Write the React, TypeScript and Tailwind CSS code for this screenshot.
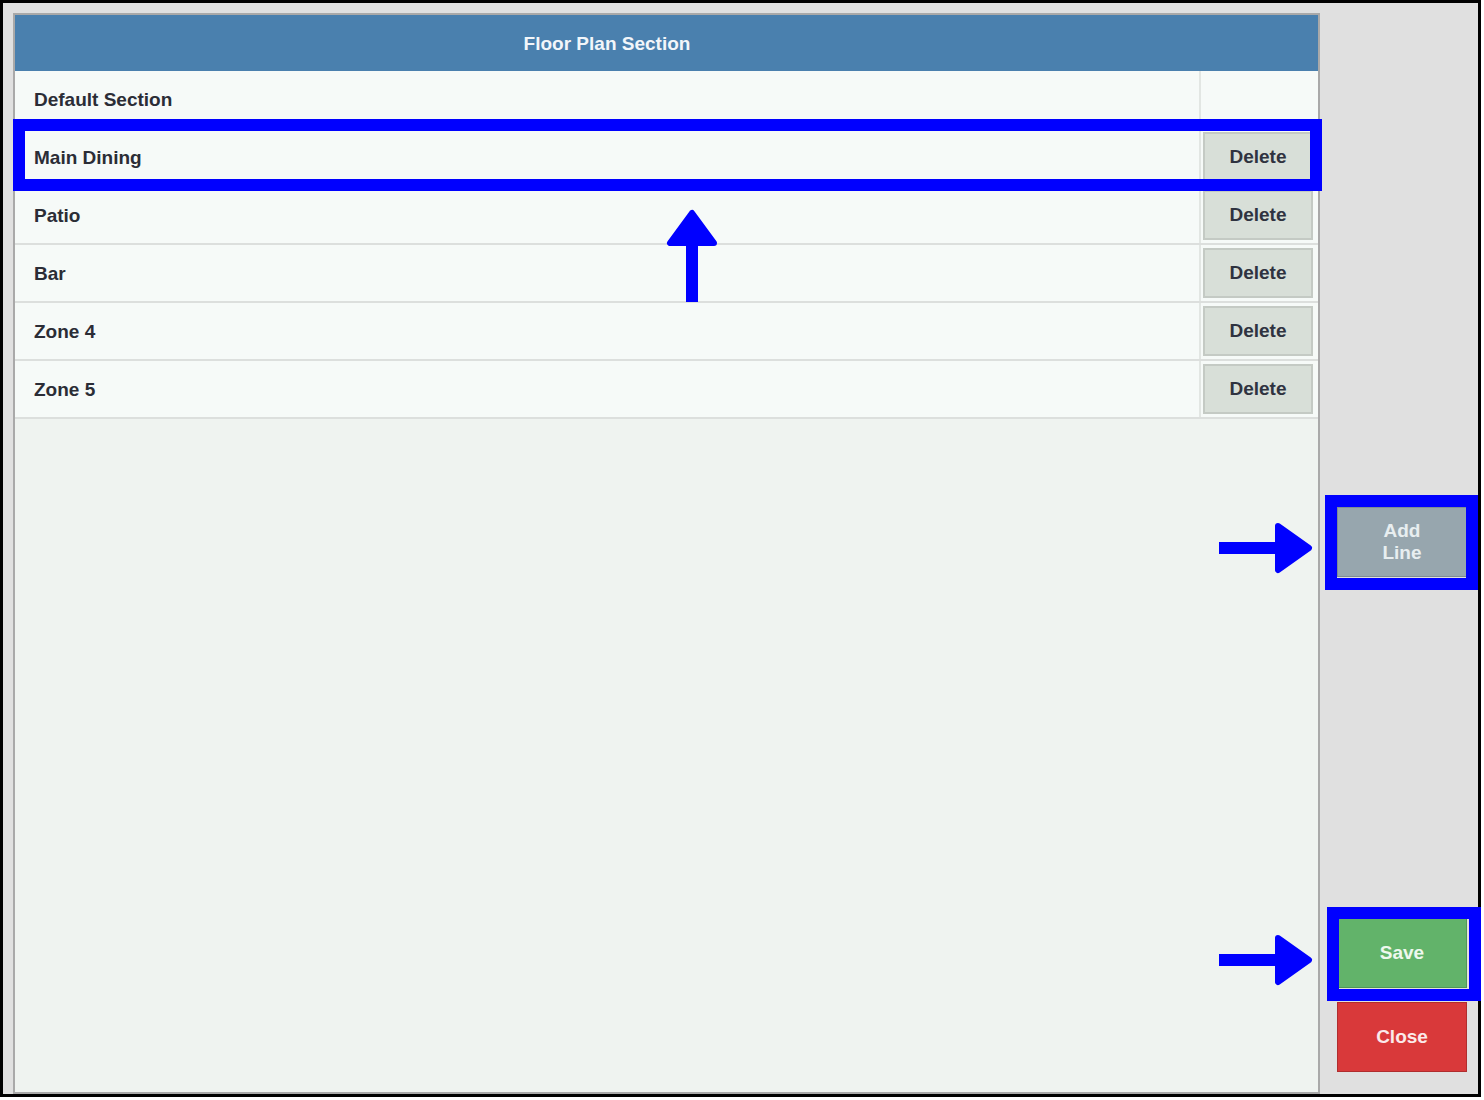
import React from "react";

const ROWS = [
  { name: "Default Section", deletable: false },
  { name: "Main Dining", deletable: true },
  { name: "Patio", deletable: true },
  { name: "Bar", deletable: true },
  { name: "Zone 4", deletable: true },
  { name: "Zone 5", deletable: true },
];

export default function App() {
  return (
    <div className="relative w-[1484px] h-[1100px] bg-white font-['Liberation_Sans',Arial,sans-serif]">
      <div className="flex w-[1481px] h-[1097px] border-[3px] border-black bg-[#e0e0e0]">
        {/* list panel */}
        <div className="ml-[10px] mt-[10px] flex w-[1307px] flex-col border-2 border-[#a9a9a9] bg-[#eff3f0]">
          <div className="flex h-[56px] shrink-0 bg-[#4a80ae] text-[19px] font-bold text-[#f2f6fa]">
            <div className="flex flex-1 items-center justify-center pt-[2px]">Floor Plan Section</div>
            <div className="w-[119px]" />
          </div>
          {ROWS.map((row) => (
            <Row key={row.name} {...row} />
          ))}
        </div>

        {/* actions */}
        <div className="flex flex-1 flex-col pl-[17px] pb-[22px]">
          <button className="mt-[504px] flex h-[70px] w-[130px] flex-col items-center justify-center border border-[#7f8c93] bg-[#97a6ae] text-[19px] font-bold leading-[22px] text-[#e8eef0]">
            <span>Add</span>
            <span>Line</span>
          </button>
          <button className="mt-auto h-[70px] w-[130px] border border-[#4f9656] bg-[#62b36a] text-[19px] font-bold text-[#eef8ee]">
            Save
          </button>
          <button className="mt-[14px] h-[70px] w-[130px] border border-[#b02d2e] bg-[#d9393a] text-[19px] font-bold text-[#fbeaea]">
            Close
          </button>
        </div>
      </div>

      {/* annotation highlights */}
      <div className="pointer-events-none absolute left-[13px] top-[119px] h-[72px] w-[1309px] border-[12px] border-[#0000ff]" />
      <div className="pointer-events-none absolute left-[1325px] top-[495px] h-[95px] w-[153px] border-[12px] border-[#0000ff]" />
      <div className="pointer-events-none absolute left-[1327px] top-[907px] h-[94px] w-[154px] border-[12px] border-[#0000ff]" />

      <svg className="pointer-events-none absolute inset-0" width="1484" height="1100" viewBox="0 0 1484 1100">
        <g fill="#0000ff" stroke="#0000ff" strokeLinejoin="round">
          <rect x="686" y="240" width="12" height="62" stroke="none" />
          <polygon points="692,213 670,243 714,243" strokeWidth="6" />

          <rect x="1219" y="542" width="60" height="12" stroke="none" />
          <polygon points="1278,526 1309,548 1278,570" strokeWidth="6" />

          <rect x="1219" y="954" width="60" height="12" stroke="none" />
          <polygon points="1278,938 1309,960 1278,982" strokeWidth="6" />
        </g>
      </svg>
    </div>
  );
}

function Row({ name, deletable }: { name: string; deletable: boolean }) {
  return (
    <div className="flex h-[58px] shrink-0 border-b-2 border-[#dcdfdd] bg-[#f6faf8]">
      <div className="flex flex-1 items-center border-r-2 border-[#e2e6e3] pl-[19px] pt-[3px] text-[19px] font-bold text-[#2b2d36]">
        {name}
      </div>
      <div className="flex w-[117px] items-center pl-[2px]">
        {deletable && (
          <button className="h-[50px] w-[110px] border-2 border-[#c4cac4] bg-[#d8dfd8] pt-[1px] text-[19px] font-bold text-[#2f3340]">
            Delete
          </button>
        )}
      </div>
    </div>
  );
}
